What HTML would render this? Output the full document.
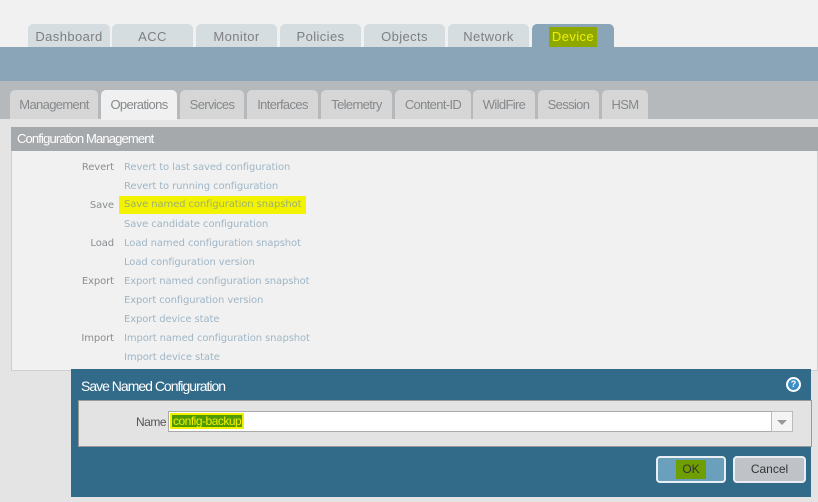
<!DOCTYPE html>
<html><head><meta charset="utf-8"><style>
*{margin:0;padding:0;box-sizing:border-box}
body{width:818px;height:502px;overflow:hidden;background:#f1f1f1;position:relative;font-family:"Liberation Sans",sans-serif}
.abs{position:absolute}
.tt{position:absolute;top:24px;height:23px;background:#d5dde0;border-radius:5px 5px 0 0;color:#7c7f82;font-size:13px;text-align:center;line-height:26px;letter-spacing:.4px}
.st{position:absolute;top:90px;height:29px;background:#d6d6d6;border-radius:5px 5px 0 0;color:#85898c;font-size:13px;text-align:center;line-height:29px;letter-spacing:-.65px}
.row{position:absolute;font-family:"DejaVu Sans",sans-serif;font-size:10px;line-height:14px;letter-spacing:-.1px}
.lb{left:0;width:114px;text-align:right;color:#8a8d90}
.lk{left:124px;color:#9fb6c6}
</style></head><body>
<div class="tt" style="left:28px;width:82px">Dashboard</div>
<div class="tt" style="left:112px;width:81px">ACC</div>
<div class="tt" style="left:196px;width:81px">Monitor</div>
<div class="tt" style="left:280px;width:81px">Policies</div>
<div class="tt" style="left:364px;width:81px">Objects</div>
<div class="tt" style="left:448px;width:81px">Network</div>
<div class="tt" style="left:532px;width:82px;background:#8aa5b7"><span style="background:#8fa800;color:#f0f000;padding:2px 3px 4px">Device</span></div>
<div class="abs" style="left:0;top:47px;width:818px;height:34px;background:#8aa5b7"></div>
<div class="abs" style="left:0;top:81px;width:818px;height:38px;background:#b5b9bc"></div>
<div class="abs" style="left:0;top:119px;width:818px;height:383px;background:#e4e4e4"></div>
<div class="st" style="left:10px;width:88px">Management</div>
<div class="st" style="left:101px;width:76px;background:#f0f0f0;height:30px">Operations</div>
<div class="st" style="left:180px;width:64px">Services</div>
<div class="st" style="left:247px;width:71px">Interfaces</div>
<div class="st" style="left:321px;width:71px">Telemetry</div>
<div class="st" style="left:395px;width:76px">Content-ID</div>
<div class="st" style="left:473px;width:62px">WildFire</div>
<div class="st" style="left:538px;width:61px">Session</div>
<div class="st" style="left:602px;width:46px">HSM</div>
<div class="abs" style="left:11px;top:127px;width:807px;height:24px;background:#a5a9ac;color:#fff;font-size:13px;line-height:24px;padding-left:6px;letter-spacing:-.85px">Configuration Management</div>
<div class="abs" style="left:11px;top:151px;width:807px;height:220px;background:#f1f1f1;border:1px solid #cfcfcf;border-top:none"></div>
<div class="row lb" style="top:161px">Revert</div><div class="row lk" style="top:161px">Revert to last saved configuration</div>
<div class="row lk" style="top:180px">Revert to running configuration</div>
<div class="row lb" style="top:199px">Save</div><div class="row lk" style="top:196px;left:119px;background:#f3f300;color:#9cb070;padding:2px 5px 2px">Save named configuration snapshot</div>
<div class="row lk" style="top:218px">Save candidate configuration</div>
<div class="row lb" style="top:237px">Load</div><div class="row lk" style="top:237px">Load named configuration snapshot</div>
<div class="row lk" style="top:256px">Load configuration version</div>
<div class="row lb" style="top:275px">Export</div><div class="row lk" style="top:275px">Export named configuration snapshot</div>
<div class="row lk" style="top:294px">Export configuration version</div>
<div class="row lk" style="top:313px">Export device state</div>
<div class="row lb" style="top:332px">Import</div><div class="row lk" style="top:332px">Import named configuration snapshot</div>
<div class="row lk" style="top:351px">Import device state</div>
<div class="abs" style="left:71px;top:369px;width:740px;height:128px;background:#326a89"></div>
<div class="abs" style="left:81px;top:377px;color:#fff;font-size:14px;line-height:18px;letter-spacing:-1px">Save Named Configuration</div>
<div class="abs" style="left:786px;top:377px;width:15px;height:15px;border-radius:50%;background:#fff;"><div style="position:absolute;left:2px;top:2px;width:11px;height:11px;border-radius:50%;background:#3c8fc4;color:#fff;font-size:9px;font-weight:bold;text-align:center;line-height:11px">?</div></div>
<div class="abs" style="left:78px;top:400px;width:734px;height:47px;background:#e3e3e3;border:1px solid #999"></div>
<div class="abs" style="left:136px;top:415px;color:#555;font-size:12px;letter-spacing:-.5px">Name</div>
<div class="abs" style="left:168px;top:411px;width:625px;height:21px;background:#fff;border:1px solid #aaa"></div>
<div class="abs" style="left:771px;top:411px;width:22px;height:21px;border:1px solid #bbb;background:#f4f4f4"><div style="position:absolute;left:5px;top:8px;border-left:5px solid transparent;border-right:5px solid transparent;border-top:5px solid #999"></div></div>
<div class="abs" style="left:170px;top:413px;height:16px;background:#4e9a00;border:2px solid #f0f000;color:#f0f000;font-size:12px;line-height:12px;padding:0 1px;letter-spacing:-.5px">config-backup</div>
<div class="abs" style="left:656px;top:456px;width:70px;height:27px;background:#6aa0bb;border:2px solid #e8eef2;border-radius:4px;text-align:center"><span style="display:inline-block;margin-top:2px;background:#6f9e00;color:#333;font-size:12px;line-height:19px;padding:0 6px">OK</span></div>
<div class="abs" style="left:733px;top:456px;width:73px;height:27px;background:#bfc3c8;border:2px solid #e8eef2;border-radius:4px;text-align:center;color:#333;font-size:12px;line-height:23px">Cancel</div>
</body></html>
